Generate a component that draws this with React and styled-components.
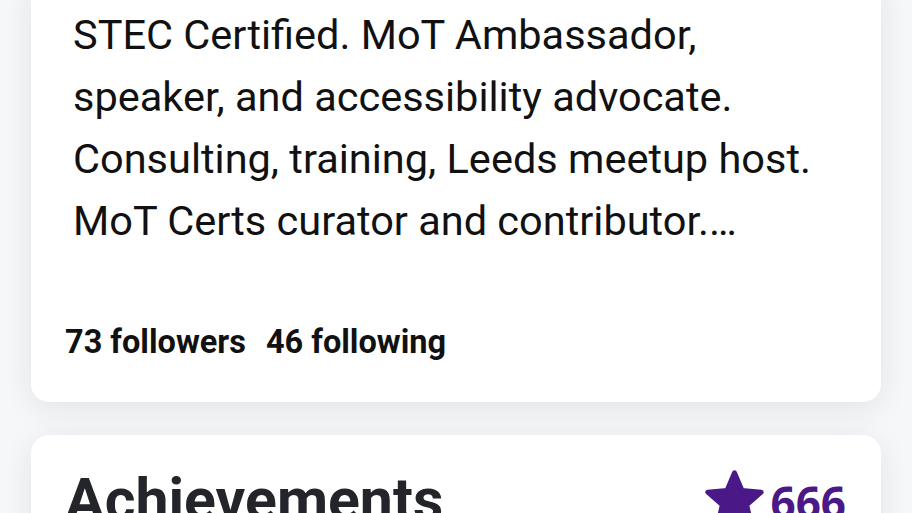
import React from "react";
import styled, { createGlobalStyle } from "styled-components";

const Global = createGlobalStyle`
  html, body { margin: 0; padding: 0; }
  body {
    background: #f6f7f9;
    font-family: Roboto, "Noto Sans", sans-serif;
    overflow: hidden;
  }
`;

const Page = styled.div`
  display: flex;
  flex-direction: column;
  gap: 33px;
  padding: 0 31px;
  margin-top: -24px;
`;

const Card = styled.section`
  background: #ffffff;
  border-radius: 18px;
  box-shadow: 0 6px 30px rgba(20, 30, 60, 0.09);
  padding: ${(p) => p.$pad};
`;

const Bio = styled.p`
  margin: 0;
  padding-left: 8px;
  font-size: 41.5px;
  line-height: 62px;
  color: #111;
  font-weight: 400;
`;

const Stats = styled.div`
  display: flex;
  gap: 20px;
  margin-top: 70px;
  font-size: 32.5px;
  font-weight: 700;
  color: #111;
  line-height: 40px;
`;

const Header = styled.div`
  display: flex;
  align-items: flex-start;
  justify-content: space-between;
`;

const Title = styled.h2`
  margin: 0;
  font-size: 59px;
  font-weight: 700;
  color: #23252a;
  line-height: 70px;
`;

const Points = styled.div`
  display: flex;
  align-items: flex-start;
  gap: 6px;
  margin-top: 4px;
  margin-right: 1px;
  color: #4a1887;
  font-family: "Open Sans", Roboto, sans-serif;
  font-weight: 700;
  font-size: 44px;
  line-height: 44px;
`;

const Count = styled.span`
  margin-top: 11px;
`;

const Star = () => (
  <svg width="61" height="60" viewBox="0 0 100 98">
    <path
      d="M50 6 L62.35 35.01 L93.75 37.79 L69.97 58.49 L77.04 89.21 L50 73 L22.96 89.21 L30.03 58.49 L6.25 37.79 L37.65 35.01 Z"
      fill="#4a1887"
      stroke="#4a1887"
      strokeWidth="8"
      strokeLinejoin="round"
    />
  </svg>
);

export default function App() {
  return (
    <>
      <Global />
      <Page>
        <Card $pad="28px 42px 40px 34px">
          <Bio>
            STEC Certified. MoT Ambassador,
            <br />
            speaker, and accessibility advocate.
            <br />
            Consulting, training, Leeds meetup host.
            <br />
            MoT Certs curator and contributor.…
          </Bio>
          <Stats>
            <span>73 followers</span>
            <span>46 following</span>
          </Stats>
        </Card>
        <Card $pad="30px 34px 40px 34px">
          <Header>
            <Title>Achievements</Title>
            <Points>
              <Star />
              <Count>666</Count>
            </Points>
          </Header>
        </Card>
      </Page>
    </>
  );
}
